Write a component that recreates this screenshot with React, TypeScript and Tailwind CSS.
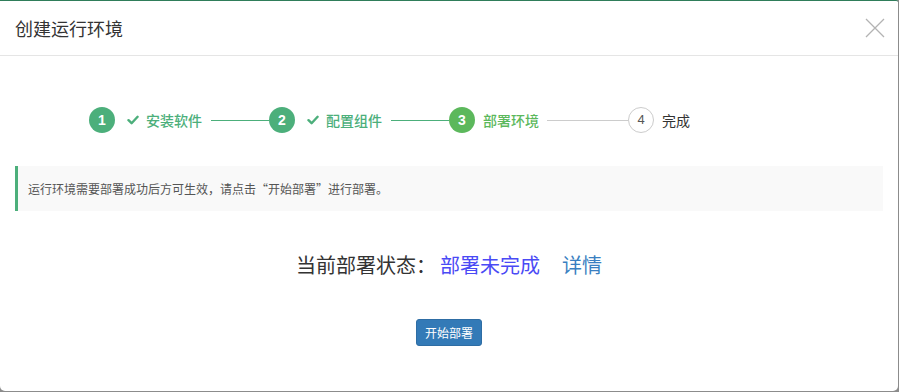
import React from "react";

const font = { fontFamily: '"Noto Sans CJK SC", "Noto Sans", sans-serif' };

function Check({ color }: { color: string }) {
  return (
    <svg width="12" height="10" viewBox="0 0 12 10" className="shrink-0">
      <path d="M1.5 5.2 L4.6 8.2 L10.6 1.8" fill="none" stroke={color} strokeWidth="2.4" strokeLinecap="round" strokeLinejoin="round" />
    </svg>
  );
}

export default function App() {
  return (
    <div className="h-[392px] w-[899px] bg-[#8c8c8c]" style={font}>
      <div className="flex h-[391px] w-[898px] flex-col rounded-b-[5px] rounded-tr-[2px] border-t border-[#2f7d5a] bg-white">
        {/* Header */}
        <div className="flex h-[55px] items-center justify-between border-b border-[#e5e5e5] pl-[15px] pr-[13px]">
          <h1 className="text-[18px] leading-none text-[#333]">创建运行环境</h1>
          <svg width="20" height="20" viewBox="0 0 20 20">
            <path d="M1 1 L19 19 M19 1 L1 19" stroke="#b3b3b3" strokeWidth="1.3" />
          </svg>
        </div>

        {/* Steps */}
        <div className="mt-[51px] flex items-center pl-[89px]">
          <div className="flex h-[26px] w-[26px] items-center justify-center rounded-full bg-[#4caf7b] text-[14px] font-bold text-white" style={{ fontFamily: "Arial, 'Liberation Sans', sans-serif" }}>1</div>
          <div className="ml-[12px] mr-[9px] flex items-center gap-[7px]">
            <Check color="#4caf7b" />
            <span className="text-[14px] font-medium text-[#4caf7b]">安装软件</span>
          </div>
          <div className="h-px w-[58px] bg-[#4caf7b]" />
          <div className="flex h-[26px] w-[26px] items-center justify-center rounded-full bg-[#4caf7b] text-[14px] font-bold text-white" style={{ fontFamily: "Arial, 'Liberation Sans', sans-serif" }}>2</div>
          <div className="ml-[12px] mr-[9px] flex items-center gap-[7px]">
            <Check color="#4caf7b" />
            <span className="text-[14px] font-medium text-[#4caf7b]">配置组件</span>
          </div>
          <div className="h-px w-[58px] bg-[#4caf7b]" />
          <div className="flex h-[26px] w-[26px] items-center justify-center rounded-full bg-[#5cb85c] text-[14px] font-bold text-white" style={{ fontFamily: "Arial, 'Liberation Sans', sans-serif" }}>3</div>
          <span className="ml-[8px] mr-[8px] text-[14px] font-medium text-[#5cb85c]">部署环境</span>
          <div className="h-px w-[81px] bg-[#cccccc]" />
          <div className="flex h-[26px] w-[26px] items-center justify-center rounded-full border border-[#cccccc] text-[13px] text-[#555]" style={{ fontFamily: "Arial, 'Liberation Sans', sans-serif" }}>4</div>
          <span className="ml-[8px] text-[14px] text-[#333]">完成</span>
        </div>

        {/* Alert */}
        <div className="mx-[15px] mt-[33px] flex h-[45px] items-center border-l-[3px] border-[#4caf7b] bg-[#f9f9f9] pl-[10px]">
          <p className="text-[12px] text-[#555]">运行环境需要部署成功后方可生效，请点击“开始部署”进行部署。</p>
        </div>

        {/* Status */}
        <div className="mt-[41px] flex items-center justify-center text-[20px] leading-[26px]">
          <span className="text-[#333]">当前部署状态：</span>
          <span className="ml-[4px] text-[#4a4af5]">部署未完成</span>
          <span className="ml-[22px] text-[#3a7fc1]">详情</span>
        </div>

        {/* Button */}
        <div className="mt-[41px] flex justify-center">
          <button className="h-[27px] w-[66px] rounded-[3px] border border-[#2e6da4] bg-[#337ab7] text-[12px] text-white">开始部署</button>
        </div>
      </div>
    </div>
  );
}
